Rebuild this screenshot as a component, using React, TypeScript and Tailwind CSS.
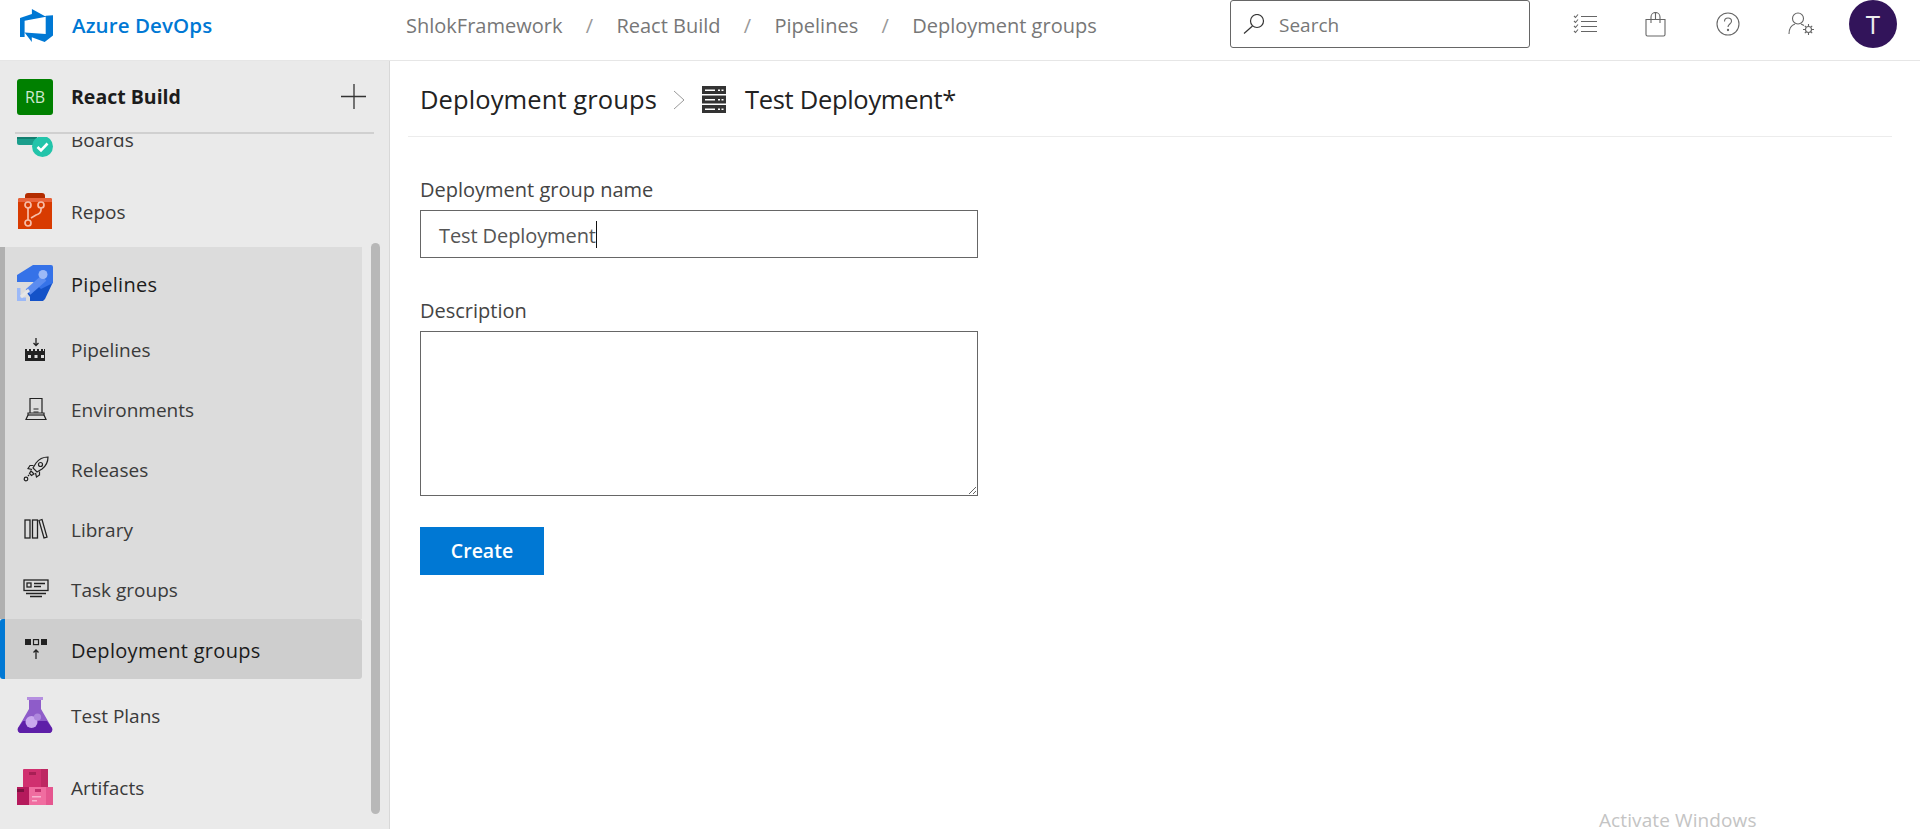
import type { ReactNode } from "react";

const FONT = "font-['Open_Sans','Noto_Sans',sans-serif]";

function BoardsIcon() {
    return (
        <svg width="36" height="36" viewBox="0 0 36 36" className="shrink-0">
            <rect x="0" y="6" width="20" height="18" rx="2" fill="#1b9e8c" />
            <rect x="0" y="6" width="20" height="12" fill="#137f70" />
            <circle cx="25.500" cy="25.500" r="10.500" fill="#23c4aa" />
            <path d="M20.500 26l3.500 3.500 6.500-7" fill="none" stroke="#fff" strokeWidth="2.600" />
        </svg>
    );
}

function ReposIcon() {
    return (
        <svg width="36" height="36" viewBox="0 0 36 36" className="shrink-0">
            <path d="M8 3a3 3 0 0 1 3-3h14a3 3 0 0 1 3 3v4H8z" fill="#b32c00" />
            <path d="M3 5h30a2 2 0 0 1 2 2v29H1V7a2 2 0 0 1 2-2z" fill="#d83b01" />
            <path d="M3 5h30a2 2 0 0 1 2 2v2H1V7a2 2 0 0 1 2-2z" fill="#e8623a" />
            <g fill="none" stroke="#f7bda8" strokeWidth="1.700">
                <circle cx="11" cy="12" r="3" />
                <circle cx="24" cy="12" r="3" />
                <circle cx="11" cy="30" r="3" />
                <path d="M11 15v12M24 15v2c0 3-2 4-5 5l-5 3" />
            </g>
        </svg>
    );
}

function PipelinesIcon() {
    return (
        <svg width="36" height="36" viewBox="0 0 36 36" className="shrink-0">
            <path d="M36 17L28 34l-2 2H13v-4l-3-4 16-11z" fill="#1452c8" />
            <path d="M16 0h18a2 2 0 0 1 2 2v16l-12 6-8-7H0v-7z" fill="#3572e8" />
            <path d="M27 13L11 27" stroke="#5b8cf0" strokeWidth="7" />
            <circle cx="26" cy="9.500" r="4.500" fill="#9cb9f7" />
            <path d="M0 23h3.500v9.500H9V36H0z" fill="#9cb9f7" />
            <path d="M4 32l8-7" stroke="#e6e6e6" strokeWidth="3" />
        </svg>
    );
}

function TestPlansIcon() {
    return (
        <svg width="36" height="36" viewBox="0 0 36 36" className="shrink-0">
            <path d="M10 0h16v3h-2v9l11 19c1 3-1 5-3 5H4c-2 0-4-2-3-5l11-19V3h-2z" fill="#8e5cc9" />
            <rect x="10" y="0" width="16" height="3" fill="#b58fe0" />
            <path d="M6 24h24l5 7c1 3-1 5-3 5H4c-2 0-4-2-3-5z" fill="#5e1fa8" />
            <circle cx="14.500" cy="25" r="6" fill="#c9a8ee" />
            <circle cx="20.500" cy="20" r="3.600" fill="#ae87dd" />
        </svg>
    );
}

function ArtifactsIcon() {
    return (
        <svg width="36" height="36" viewBox="0 0 36 36" className="shrink-0">
            <path d="M6 1a1 1 0 0 1 1-1h23a1 1 0 0 1 1 1v19H6z" fill="#d0306f" />
            <rect x="24" y="0" width="7" height="20" fill="#bd2862" />
            <rect x="12" y="3" width="7" height="3" fill="#a81f55" />
            <rect x="0" y="18" width="14" height="18" fill="#b51a5c" />
            <rect x="0" y="20" width="7" height="3" fill="#7d1140" />
            <rect x="12" y="18" width="24" height="18" fill="#f06da0" />
            <rect x="29" y="18" width="7" height="18" fill="#e5568f" />
            <rect x="18" y="20" width="6" height="3" fill="#c2316e" />
            <rect x="15" y="27" width="9" height="1.500" fill="#f8b3cf" />
            <rect x="15" y="31" width="5" height="1.500" fill="#f8b3cf" />
        </svg>
    );
}

function SubPipelines() {
    return (
        <svg width="24" height="24" viewBox="0 0 24 24" className="shrink-0">
            <path d="M12 1v7M9.500 6l2.500 2.500L14.500 6" fill="none" stroke="#222" strokeWidth="1.300" />
            <path d="M1 24V12h2v2h2v-2h2v2h2v-2h2v2h2v-2h2v2h2v-2h2v2h1v-2h1v12z" fill="#222" />
            <rect x="4" y="18" width="3" height="3" fill="#ddd" />
            <rect x="10.500" y="18" width="3" height="3" fill="#ddd" />
            <rect x="17" y="18" width="3" height="3" fill="#ddd" />
        </svg>
    );
}

function SubEnvironments() {
    return (
        <svg width="24" height="24" viewBox="0 0 24 24" className="shrink-0" fill="none" stroke="#222" strokeWidth="1.200">
            <path d="M6 16V1.500h12V16" />
            <path d="M9.500 12h5M9.500 15h5" />
            <path d="M4 16h16v2l2 4.500H2L4 18z" />
            <path d="M4 18h16" />
        </svg>
    );
}

function SubReleases() {
    return (
        <svg width="26" height="26" viewBox="0 0 26 26" className="shrink-0" fill="none" stroke="#222" strokeWidth="1.200">
            <path d="M25 1c-5 0-9 2-12 6l-3 5 4 4 5-3c4-3 6-7 6-12z" />
            <circle cx="17.500" cy="8.500" r="2" />
            <path d="M10.500 9.500H7l-2 3 4 1M16.500 15.500V19l-3 2-1-4" />
            <path d="M8 15l3 3-2.500 1.500L6.500 17.500z" />
            <circle cx="3" cy="23" r="1.800" />
            <path d="M5 20l1-1" />
        </svg>
    );
}

function SubLibrary() {
    return (
        <svg width="24" height="24" viewBox="0 0 24 24" className="shrink-0" fill="none" stroke="#222" strokeWidth="1.300">
            <rect x="1" y="3" width="5" height="18" />
            <rect x="8.500" y="3" width="5" height="18" />
            <path d="M15 3.500l3-1 5 17.500-3 1z" />
        </svg>
    );
}

function SubTaskGroups() {
    return (
        <svg width="26" height="20" viewBox="0 0 26 20" className="shrink-0" fill="none" stroke="#222" strokeWidth="1.300">
            <rect x="1" y="1" width="24" height="10.500" />
            <rect x="4" y="4" width="4" height="4" />
            <path d="M11 4.500h11M11 7.500h7M3 14.500h20M7 17.500h12" />
        </svg>
    );
}

function SubDeployment() {
    return (
        <svg width="24" height="24" viewBox="0 0 24 24" className="shrink-0">
            <rect x="1" y="2" width="6" height="6" fill="#222" />
            <rect x="9.500" y="2.600" width="5" height="5" fill="none" stroke="#222" strokeWidth="1.200" />
            <rect x="17" y="2" width="6" height="6" fill="#222" />
            <path d="M12 22v-9M9.500 15.500L12 13l2.500 2.500" fill="none" stroke="#222" strokeWidth="1.300" />
        </svg>
    );
}

function ServerIcon() {
    return (
        <svg width="24" height="27" viewBox="0 0 24 27" className="shrink-0">
            <g fill="#333">
                <rect x="0" y="0" width="24" height="8" />
                <rect x="0" y="9.500" width="24" height="8" />
                <rect x="0" y="19" width="24" height="8" />
            </g>
            <g fill="#fff">
                <rect x="3" y="3.500" width="10" height="1.500" />
                <rect x="16" y="3.500" width="2" height="1.500" />
                <rect x="19.500" y="3.500" width="2" height="1.500" />
                <rect x="3" y="13" width="10" height="1.500" />
                <rect x="16" y="13" width="2" height="1.500" />
                <rect x="19.500" y="13" width="2" height="1.500" />
                <rect x="3" y="22.500" width="10" height="1.500" />
                <rect x="16" y="22.500" width="2" height="1.500" />
                <rect x="19.500" y="22.500" width="2" height="1.500" />
            </g>
        </svg>
    );
}

function AzureLogo() {
    return (
        <svg width="33" height="33" viewBox="0 0 33 33" className="shrink-0">
            <path
                d="M33 6.200v20.300l-8.300 6.500-12.900-4.700v4.600l-7.200-9.400 21.100 1.600V6.700zM26 7.800L11.900 0v5.100L0 9v19.100l4.600 0V11.700z"
                fill="#0078d4"
            />
        </svg>
    );
}

function TopIcons() {
    return (
        <div className="flex items-center text-[#666]">
            <svg width="24" height="20" viewBox="0 0 24 20" fill="none" stroke="#666" strokeWidth="1.100" className="ml-[43px]">
                <path d="M8 2.500h16M8 7.500h16M8 12.500h16M8 17.500h16" />
                <path d="M1 2l1.500 1.500L5 .5M1 7l1.500 1.500L5 5.500M1 12l1.500 1.500 2.500-3M1 17l1.500 1.500 2.500-3" />
            </svg>
            <svg width="21" height="25" viewBox="0 0 21 25" fill="none" stroke="#666" strokeWidth="1.100" className="ml-[48px]">
                <path d="M1 7.500h19v15a1.500 1.500 0 0 1-1.500 1.500h-16A1.500 1.500 0 0 1 1 22.500z" />
                <path d="M6 11V5a4.500 4.500 0 0 1 9 0v6M6 7.500V5M10.500 1v6.500" />
            </svg>
            <svg width="24" height="24" viewBox="0 0 24 24" fill="none" stroke="#666" strokeWidth="1.100" className="ml-[50px]">
                <circle cx="12" cy="12" r="11" />
                <path d="M8.500 9.500C8.500 7.500 10 6 12 6s3.500 1.400 3.500 3.200c0 2.800-3.500 2.800-3.500 5.800" />
                <circle cx="12" cy="18" r=".6" fill="#666" />
            </svg>
            <svg width="27" height="24" viewBox="0 0 27 24" fill="none" stroke="#666" strokeWidth="1.100" className="ml-[48px]">
                <circle cx="10" cy="6.500" r="5.500" />
                <path d="M1 22c0-6 3-9 6-10M13 12l3 1.500" />
                <circle cx="20.500" cy="17.500" r="3" />
                <path d="M20.500 12v2M20.500 21v2M15 17.500h2M24 17.500h2M16.800 13.800l1.400 1.400M22.800 19.800l1.400 1.400M16.800 21.200l1.400-1.400M22.800 15.200l1.400-1.400" />
            </svg>
            <div className="ml-[34px] w-12 h-12 rounded-full bg-[#32145a] flex items-center justify-center text-[#eee] text-[26px]">
                T
            </div>
        </div>
    );
}

function Header() {
    const crumbs = ["ShlokFramework", "React Build", "Pipelines", "Deployment groups"];
    return (
        <header className="h-[61px] shrink-0 bg-white border-b border-[#e6e6e6] flex items-start">
            <div className="w-[406px] shrink-0 flex items-center pl-5 h-[50px]">
                <AzureLogo />
                <span className="ml-[19px] text-[#0078d4] font-semibold text-[20.5px] tracking-[0.1px]">Azure DevOps</span>
            </div>
            <div className="w-[824px] shrink-0 flex items-center h-[50px] pt-0.5 text-[#777] text-[20px]">
                {crumbs.map((c, i) => (
                    <div key={c} className="flex items-center">
                        {i > 0 && <span className="w-[54px] text-center text-[#999]">/</span>}
                        <span>{c}</span>
                    </div>
                ))}
            </div>
            <div className="w-[300px] h-12 shrink-0 border border-[#666] rounded-[3px] flex items-center pl-3">
                <svg width="22" height="20" viewBox="0 0 22 20" fill="none" stroke="#333" strokeWidth="1.200">
                    <circle cx="14" cy="7" r="6.500" />
                    <path d="M9.500 12L1 19.500" />
                </svg>
                <span className="ml-[14px] pt-0.5 text-[#777] text-[19px]">Search</span>
            </div>
            <div className="h-12">
                <TopIcons />
            </div>
        </header>
    );
}

function NavRow({ icon, label, strong }: { icon: ReactNode; label: string; strong?: boolean }) {
    return (
        <div className="flex items-center h-[72px] pl-[17px]">
            {icon}
            <span className={`ml-[18px] pt-[3px] ${strong ? "text-[20px] tracking-[0.3px] text-[#1c1c1c] font-medium" : "text-[19px] text-[#3a3a3a]"}`}>
                {label}
            </span>
        </div>
    );
}

function NavRowSub({ icon, label }: { icon: ReactNode; label: string }) {
    return (
        <div className="h-[60px] flex items-center">
            <div className="w-[66px] flex justify-center pr-[5px]">{icon}</div>
            <span className="pt-[3px] text-[19px] text-[#3a3a3a]">{label}</span>
        </div>
    );
}

function Sidebar() {
    return (
        <aside className="relative w-[390px] shrink-0 bg-[#eaeaea] border-r border-[#d8d8d8] flex flex-col overflow-hidden">
            <div className="shrink-0 h-[71px] flex items-center pl-[17px] pr-[22px]">
                <div className="w-9 h-9 rounded-[3px] bg-[#008000] text-[#cfe8cf] flex items-center justify-center text-[16px]">RB</div>
                <span className="ml-[18px] text-[#1c1c1c] font-bold text-[19.5px]">React Build</span>
                <svg width="26" height="26" viewBox="0 0 26 26" className="ml-auto" stroke="#333" strokeWidth="1.300">
                    <path d="M13 0v25M0 12.500h25" />
                </svg>
            </div>
            <div className="shrink-0 h-0.5 bg-[#d0d0d0] mx-[15px]" />
            <div className="flex-1 overflow-hidden mt-[3px]">
                <div className="mt-[-34px] w-[362px]">
                    <NavRow icon={<BoardsIcon />} label="Boards" />
                    <NavRow icon={<ReposIcon />} label="Repos" />
                    <div className="bg-[#dcdcdc] border-l-[5px] border-[#b0b0b0]">
                        <NavRow strong icon={<div className="-ml-[5px]"><PipelinesIcon /></div>} label="Pipelines" />
                        <NavRowSub icon={<SubPipelines />} label="Pipelines" />
                        <NavRowSub icon={<SubEnvironments />} label="Environments" />
                        <NavRowSub icon={<SubReleases />} label="Releases" />
                        <NavRowSub icon={<SubLibrary />} label="Library" />
                        <NavRowSub icon={<SubTaskGroups />} label="Task groups" />
                    </div>
                    <div className="h-[60px] flex items-center bg-[#cecece] border-l-[5px] border-[#0078d4] rounded-[3px]">
                        <div className="w-[66px] flex justify-center pr-[5px]"><SubDeployment /></div>
                        <span className="pt-[3px] text-[20px] tracking-[0.3px] text-[#1c1c1c] font-medium">Deployment groups</span>
                    </div>
                    <NavRow icon={<TestPlansIcon />} label="Test Plans" />
                    <NavRow icon={<ArtifactsIcon />} label="Artifacts" />
                </div>
            </div>
            <div className="absolute left-[371px] top-[182px] w-[9px] h-[571px] rounded-[5px] bg-[#b8b8b8]" />
        </aside>
    );
}

function Main() {
    return (
        <main className="relative flex-1 bg-white pl-[18px] pr-7">
            <div className="h-[76px] border-b border-[#ececec] flex items-center pl-3 pt-0.5 text-[#222]">
                <span className="text-[25.5px] tracking-[0.1px]">Deployment groups</span>
                <svg width="14" height="22" viewBox="0 0 14 22" fill="none" stroke="#999" strokeWidth="1" className="ml-[15px]">
                    <path d="M2 2l10 9-10 9" />
                </svg>
                <div className="ml-[16px]"><ServerIcon /></div>
                <span className="ml-[19px] text-[25.5px] tracking-[-0.3px]">Test Deployment*</span>
            </div>
            <div className="pl-3 w-[570px]">
                <label className="block mt-[39px] h-[34px] text-[#444] text-[20px] leading-[27px]">Deployment group name</label>
                <div className="h-12 border border-[#666] flex items-center pl-[18px] text-[#555] text-[20px] tracking-[-0.1px]">
                    <span className="pt-[3px]">Test Deployment</span>
                    <span className="inline-block w-px h-[27px] bg-[#111]" />
                </div>
                <label className="block mt-[39px] h-[34px] text-[#444] text-[20px] leading-[27px]">Description</label>
                <textarea className="block w-full h-[165px] border border-[#666] resize outline-none" />
                <button className="mt-[31px] w-[124px] h-12 bg-[#0078d4] text-white font-semibold text-[19.5px]">Create</button>
            </div>
            <div className="absolute left-[1209px] top-[746px] text-[#c4c4c4] text-[19px] tracking-[0.1px] leading-[26px]">
                Activate Windows
            </div>
        </main>
    );
}

export default function App() {
    return (
        <div className={`${FONT} w-full h-screen overflow-hidden flex flex-col bg-white`}>
            <Header />
            <div className="flex flex-1 min-h-0">
                <Sidebar />
                <Main />
            </div>
        </div>
    );
}
